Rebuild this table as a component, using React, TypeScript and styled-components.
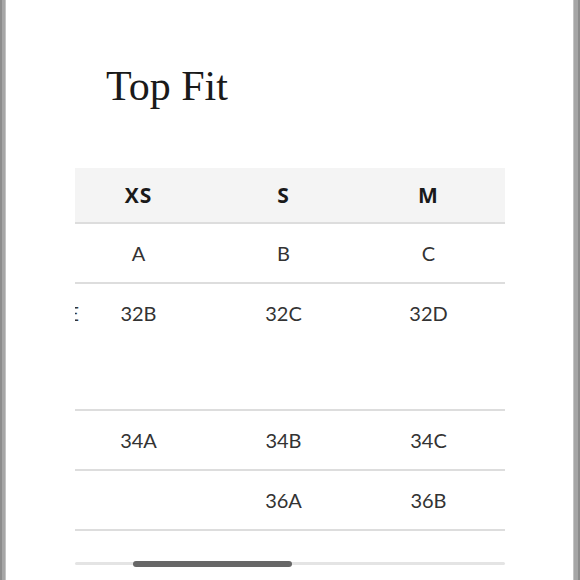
import React from 'react';
import styled, { createGlobalStyle } from 'styled-components';

const GlobalStyle = createGlobalStyle`
  html, body {
    margin: 0;
    padding: 0;
    background: #fff;
  }
`;

const Frame = styled.div`
  display: flex;
  width: 580px;
  height: 580px;
  overflow: hidden;
`;

const SideBar = styled.div<{ $side: 'left' | 'right' }>`
  flex: 0 0 ${(p) => (p.$side === 'left' ? 6 : 7)}px;
  background: #a6a6a6;
  border-${(p) => (p.$side === 'left' ? 'left' : 'right')}: 2px solid #8c8c8c;
  border-${(p) => (p.$side === 'left' ? 'right' : 'left')}: 1px solid #c4c4c4;
  box-sizing: border-box;
`;

const Content = styled.div`
  flex: 1;
  padding-left: 69px;
  display: flex;
  flex-direction: column;
`;

const Title = styled.h1`
  margin: 65px 0 0 31px;
  font-family: 'Liberation Serif', 'Times New Roman', serif;
  font-weight: 400;
  font-size: 42px;
  line-height: 42px;
  color: #1a1a1a;
`;

const TableClip = styled.div`
  margin-top: 61px;
  width: 430px;
  overflow: hidden;
`;

const Table = styled.div`
  margin-left: -109px;
  width: 575px;
  font-family: Lato, 'Open Sans', sans-serif;
`;

const Row = styled.div<{ $head?: boolean; $tall?: boolean }>`
  display: flex;
  height: ${(p) => (p.$head ? 54 : p.$tall ? 125 : 58)}px;
  background: ${(p) => (p.$head ? '#f4f4f4' : 'transparent')};
  border-bottom: 2px solid #dddddd;
  align-items: ${(p) => (p.$tall ? 'flex-start' : 'center')};
`;

const LabelCell = styled.div`
  flex: 0 0 100px;
  text-align: right;
  font-size: 20px;
  line-height: 20px;
  color: #333;
  padding-top: 19px;
  white-space: nowrap;

  span {
    display: inline-block;
    margin-right: -13px;
  }
`;

const Cell = styled.div<{ $head?: boolean; $tall?: boolean }>`
  flex: 0 0 145px;
  text-align: center;
  font-family: ${(p) => (p.$head ? "'Open Sans', Lato, sans-serif" : 'Lato, sans-serif')};
  font-size: ${(p) => (p.$head ? 21 : 20)}px;
  font-weight: ${(p) => (p.$head ? 700 : 400)};
  letter-spacing: ${(p) => (p.$head ? '1px' : '0')};
  line-height: 20px;
  color: ${(p) => (p.$head ? '#1a1a1a' : '#333')};
  padding-top: ${(p) => (p.$tall ? 19 : 0)}px;
`;

const Spacer = styled.div`
  flex: 1;
`;

const Track = styled.div`
  margin-top: 31px;
  width: 430px;
  height: 3px;
  border-radius: 2px;
  background: #e4e4e4;
  display: flex;
  align-items: center;
`;

const Thumb = styled.div`
  margin-left: 58px;
  width: 159px;
  height: 6px;
  border-radius: 3px;
  background: #676767;
`;

const rows = [
  { cells: ['A', 'B', 'C'] },
  { cells: ['32B', '32C', '32D'], tall: true, label: 'E' },
  { cells: ['34A', '34B', '34C'] },
  { cells: ['', '36A', '36B'] },
];

function App() {
  return (
    <>
      <GlobalStyle />
      <Frame>
        <SideBar $side="left" />
        <Content>
          <Title>Top Fit</Title>
          <TableClip>
            <Table>
              <Row $head>
                <LabelCell />
                <Cell $head>XS</Cell>
                <Cell $head>S</Cell>
                <Cell $head>M</Cell>
                <Spacer />
              </Row>
              {rows.map((row, i) => (
                <Row key={i} $tall={row.tall}>
                  <LabelCell>{row.label && <span>{row.label}</span>}</LabelCell>
                  {row.cells.map((c, j) => (
                    <Cell key={j} $tall={row.tall}>
                      {c}
                    </Cell>
                  ))}
                  <Spacer />
                </Row>
              ))}
            </Table>
          </TableClip>
          <Track>
            <Thumb />
          </Track>
        </Content>
        <SideBar $side="right" />
      </Frame>
    </>
  );
}

export default App;
